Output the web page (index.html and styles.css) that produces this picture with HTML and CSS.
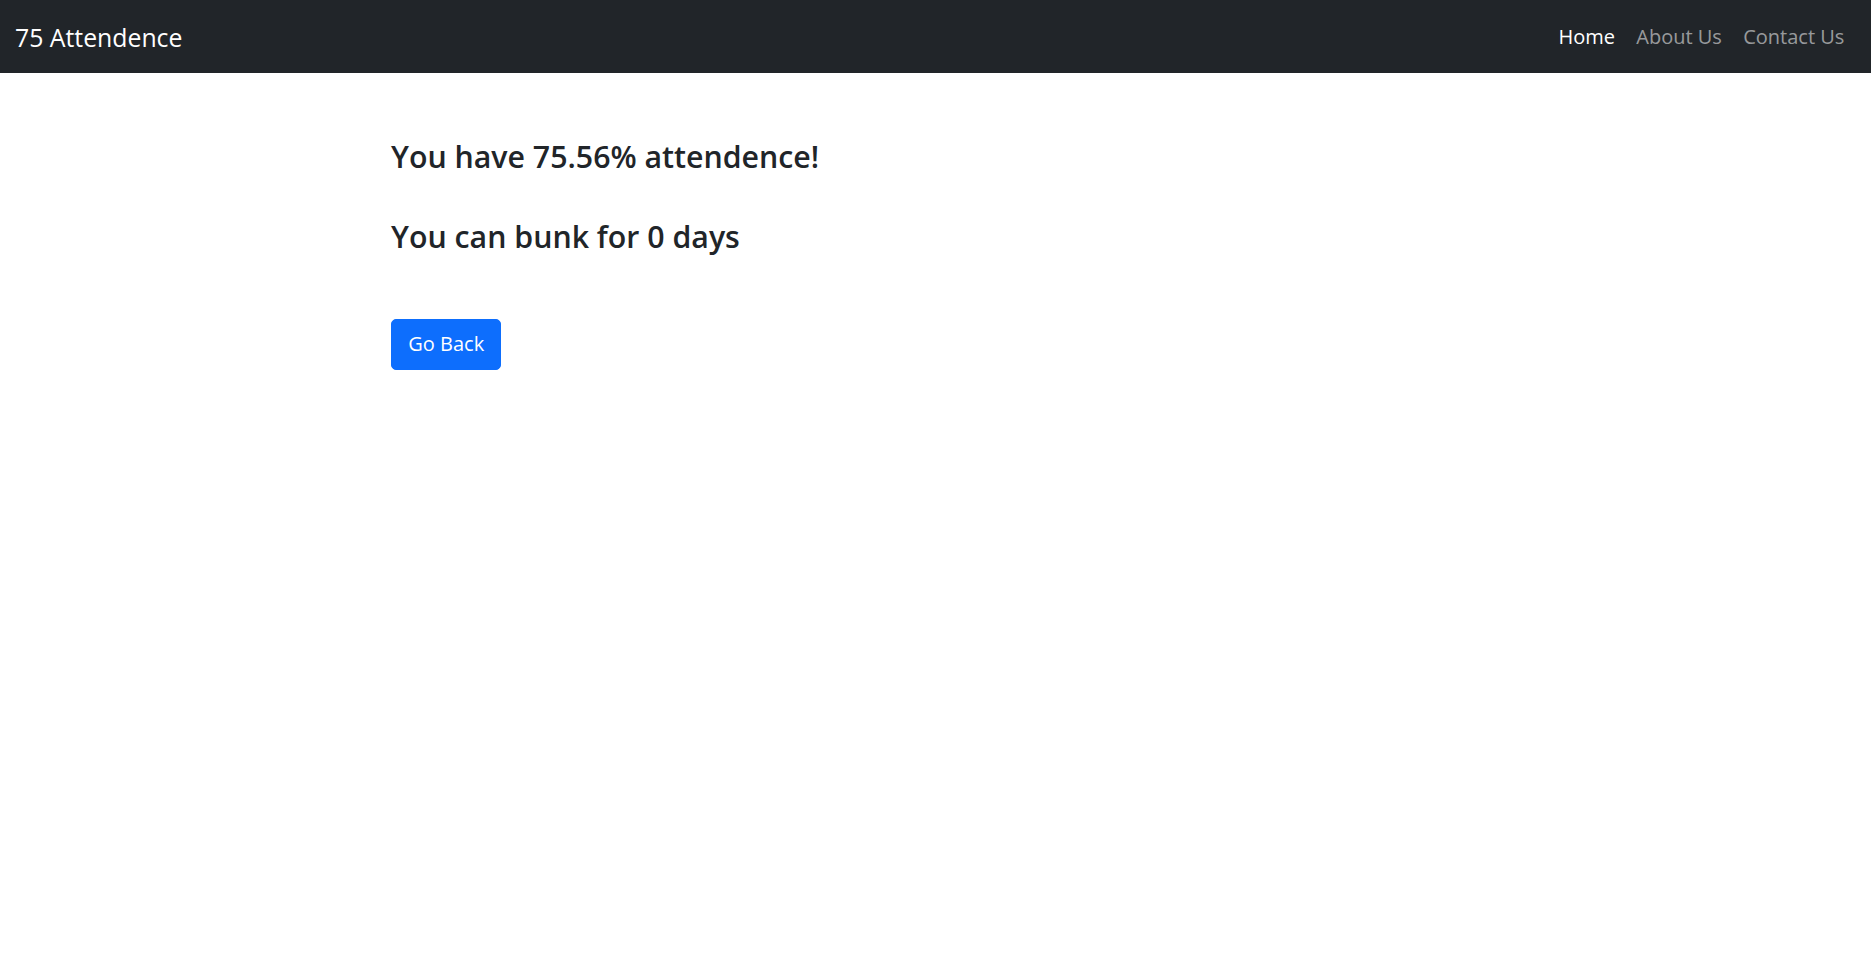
FILE: index.html
```html
<!DOCTYPE html>
<html lang="en">
<head>
<meta charset="utf-8">
<title>75 Attendence</title>
<link rel="stylesheet" href="styles.css">
</head>
<body>
<nav class="navbar">
  <a class="brand" href="#">75 Attendence</a>
  <ul class="nav">
    <li><a class="nav-link active" href="#">Home</a></li>
    <li><a class="nav-link" href="#">About Us</a></li>
    <li><a class="nav-link" href="#">Contact Us</a></li>
  </ul>
</nav>
<main class="container">
  <h4 class="result">You have 75.56% attendence!</h4>
  <h4 class="result second">You can bunk for 0 days</h4>
  <a class="btn" href="#">Go Back</a>
</main>
</body>
</html>
```
FILE: styles.css
```css
* { box-sizing: border-box; }
html, body { margin: 0; padding: 0; }
body {
  font-family: "Open Sans", "Noto Sans", sans-serif;
  color: #212529;
  background: #fff;
}
.navbar {
  height: 73px;
  background: #212529;
  display: flex;
  align-items: center;
  justify-content: space-between;
  padding: 0 16px 0 15px;
}
.brand {
  color: #fff;
  text-decoration: none;
  font-size: 24.8px;
  line-height: 40px;
}
.nav {
  list-style: none;
  margin: 0;
  padding: 0;
  display: flex;
}
.nav-link {
  display: block;
  padding: 0 10.67px;
  font-size: 20px;
  line-height: 32px;
  color: rgba(255,255,255,.55);
  text-decoration: none;
}
.nav-link.active { color: #fff; }
.container {
  max-width: 1089px;
  margin: 0 auto;
  padding-top: 64.5px;
}
.result {
  margin: 0;
  font-size: 30.3px;
  font-weight: 600;
  line-height: 38.4px;
}
.second { margin-top: 42px; }
.btn {
  display: inline-block;
  margin-top: 62.5px;
  background: #0d6efd;
  color: #fff;
  text-decoration: none;
  border: 1.33px solid #0d6efd;
  border-radius: 5px;
  padding: 8.5px 16.3px;
  font-size: 20px;
  line-height: 32px;
}
```
